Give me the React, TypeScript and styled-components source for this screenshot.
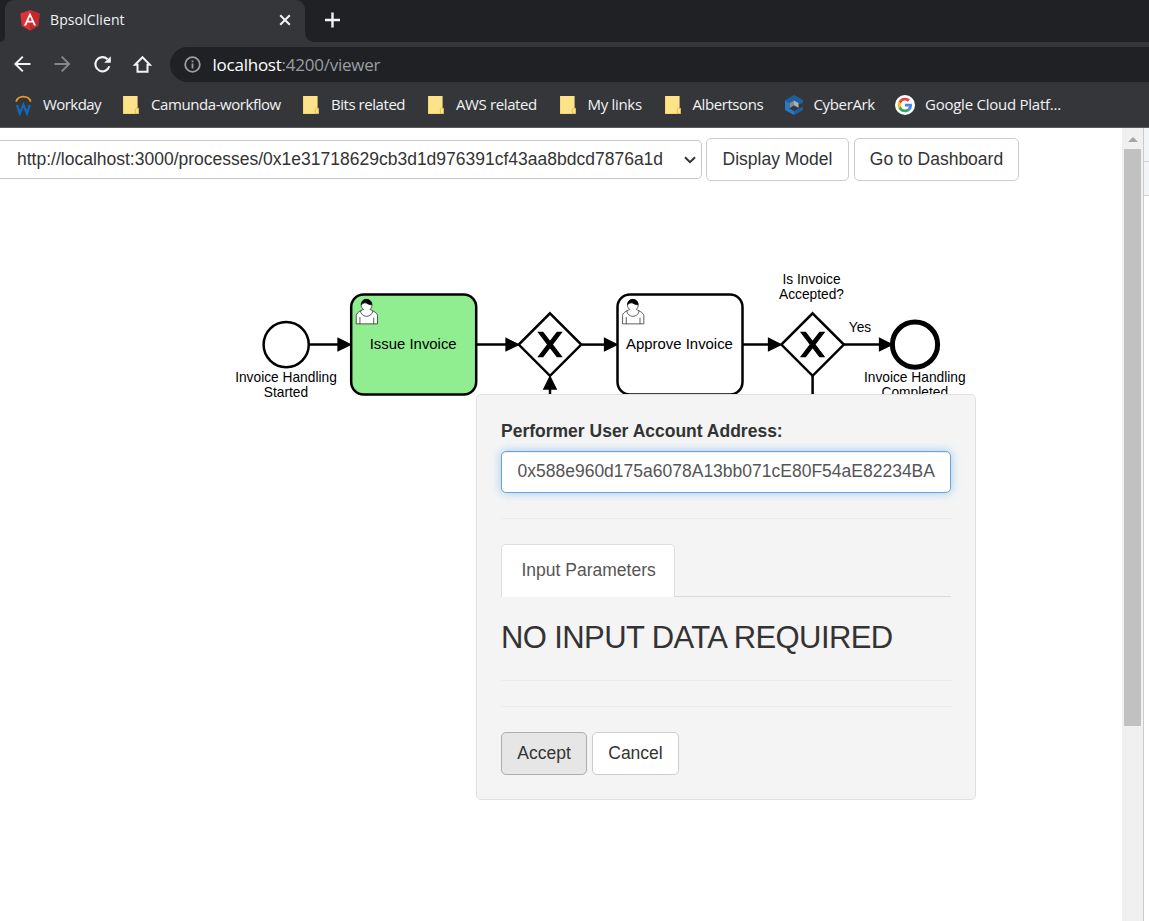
import React from 'react';
import styled, { createGlobalStyle } from 'styled-components';

const GlobalStyle = createGlobalStyle`
  *, *::before, *::after { box-sizing: border-box; }
  body { margin: 0; background: #fff; overflow: hidden; }
`;

const uiFont = `'Open Sans', 'Noto Sans', sans-serif`;
const pageFont = `'Liberation Sans', Arial, sans-serif`;

const Window = styled.div`
  width: 1149px;
  height: 921px;
  display: flex;
  flex-direction: column;
  overflow: hidden;
  background: #fff;
`;

const TabStrip = styled.div`
  height: 42px;
  flex: none;
  display: flex;
  background: #202124;
`;

const StripEdge = styled.div`
  width: 5px;
  background: #35363a;
  &::before {
    content: '';
    display: block;
    height: 42px;
    background: #202124;
    border-bottom-right-radius: 6px;
  }
`;

const Tab = styled.div`
  width: 300px;
  display: flex;
  align-items: center;
  padding: 0 13px 2px 15px;
  background: #35363a;
  border-radius: 9px 9px 0 0;
  color: #f1f3f4;
`;

const TabTitle = styled.span`
  flex: 1;
  margin-left: 10px;
  font: 14px/20px ${uiFont};
  letter-spacing: 0.1px;
`;

const StripRest = styled.div`
  flex: 1;
  background: #35363a;
`;

const StripRestInner = styled.div`
  height: 42px;
  background: #202124;
  border-bottom-left-radius: 9px;
  display: flex;
  align-items: center;
  padding: 0 0 2px 18px;
`;

const Toolbar = styled.div`
  height: 41px;
  flex: none;
  display: flex;
  align-items: center;
  padding-left: 12px;
  background: #35363a;
  padding-top: 4px;
`;

const NavIcon = styled.span`
  width: 40px;
  height: 22px;
  display: flex;
  align-items: center;
  padding-bottom: 1px;
`;

const AddressBar = styled.div`
  flex: 1;
  height: 35px;
  display: flex;
  align-items: center;
  margin-left: -2px;
  padding-left: 13px;
  border-radius: 18px 0 0 18px;
  background: #202124;
`;

const Url = styled.span`
  margin-left: 10.500px;
  font: 17px/24px ${uiFont};
  letter-spacing: -0.24px;
  color: #9a9da1;
  b { font-weight: 400; color: #fff; }
`;

const BookmarkBar = styled.div`
  height: 45px;
  flex: none;
  display: flex;
  align-items: center;
  background: #35363a;
  border-bottom: 1px solid #5a5b5f;
  padding-left: 15px;
`;

const Bookmark = styled.div<{ $width: number; $gap: number; $spacing: number }>`
  width: ${(p) => p.$width}px;
  flex: none;
  display: flex;
  align-items: center;
  gap: ${(p) => p.$gap}px;
  font: 15px/20px ${uiFont};
  letter-spacing: ${(p) => p.$spacing}px;
  white-space: nowrap;
  color: #f1f3f4;
  svg { flex: none; }
  span { padding-bottom: 2px; }
`;

const Body = styled.div`
  flex: 1;
  display: flex;
  min-height: 0;
`;

const Page = styled.main`
  width: 1122px;
  display: flex;
  flex-direction: column;
  font-family: ${pageFont};
  background: #fff;
`;

const Controls = styled.div`
  height: 62px;
  flex: none;
  display: flex;
  align-items: center;
  padding-top: 1px;
  gap: 5px;
`;

const ProcessSelect = styled.div`
  width: 702px;
  height: 39px;
  margin-right: -1px;
  display: flex;
  align-items: center;
  justify-content: space-between;
  padding: 0 5px 0 17px;
  border: 1px solid #c8c8c8;
  border-left: 0;
  border-radius: 0 5px 5px 0;
  font-size: 17.5px;
  color: #333;
  white-space: nowrap;
`;

const Button = styled.button<{ $width: number; $active?: boolean }>`
  width: ${(p) => p.$width}px;
  height: 43px;
  padding: 0;
  border: 1px solid ${(p) => (p.$active ? '#adadad' : '#ccc')};
  border-radius: 5px;
  background: ${(p) => (p.$active ? '#e6e6e6' : '#fff')};
  font: 17.5px/25px ${pageFont};
  color: #333;
  white-space: nowrap;
`;

const Stage = styled.div`
  flex: 1;
  position: relative;
  svg { display: block; }
`;

const Panel = styled.section`
  position: absolute;
  left: 476px;
  top: 204px;
  width: 500px;
  height: 406px;
  padding: 24px;
  border: 1px solid #e0e0e0;
  border-radius: 5px;
  background: #f4f4f4;
  color: #333;
`;

const FieldLabel = styled.div`
  font: bold 17.5px/25px ${pageFont};
  margin-bottom: 7px;
`;

const Field = styled.div`
  height: 42px;
  display: flex;
  align-items: center;
  padding: 0 0 1px 15.500px;
  border: 1px solid #66a6dc;
  border-radius: 5px;
  background: #fff;
  box-shadow: inset 0 1px 1px rgba(0, 0, 0, 0.075), 0 0 10px rgba(102, 175, 233, 0.6);
  font-size: 17.5px;
  color: #555;
  white-space: nowrap;
`;

const Rule = styled.hr`
  height: 1px;
  border: 0;
  margin: 25px 0;
  background: #ebebeb;
`;

const Tabs = styled.div`
  height: 53px;
  display: flex;
  border-bottom: 1px solid #d9d9d9;
`;

const PanelTab = styled.div`
  width: 174px;
  height: 53px;
  padding: 13px 0 0 19.500px;
  border: 1px solid #ddd;
  border-bottom: 0;
  border-radius: 5px 5px 0 0;
  background: #fff;
  font-size: 17.5px;
  line-height: 25px;
  color: #555;
  white-space: nowrap;
`;

const Notice = styled.h2`
  margin: 23px 0;
  font-size: 31px;
  line-height: 35px;
  font-weight: 400;
  letter-spacing: -0.6px;
  white-space: nowrap;
`;

const Actions = styled.div`
  display: flex;
  gap: 5px;
`;

const Scrollbar = styled.div`
  width: 21px;
  display: flex;
  flex-direction: column;
  align-items: center;
  background: #f0f0f0;
  svg { display: block; margin: 9px 0 7px; }
`;

const Thumb = styled.div`
  width: 17px;
  height: 577px;
  background: #c1c1c1;
`;

const SidePane = styled.div`
  flex: 1;
  border-left: 1px solid #cacbcc;
`;

const SideRow = styled.div`
  height: 34px;
  border-bottom: 1px solid #cfcfd3;
  background: #f3f4f8;
`;

const FolderIcon = () => (
  <svg width="16" height="18" viewBox="0 0 16 18">
    <path d="M0 0h14.6v12.4h1V18H0z" fill="#fde28a" />
    <path d="M12.4 17.5v-4.3l1.2-1h2V17.5z" fill="#fbe48f" stroke="#d9b549" strokeWidth=".8" />
    <path d="M.3 0v17.7h12" fill="none" stroke="#e8c860" strokeWidth=".6" />
  </svg>
);

const WorkdayIcon = () => (
  <svg width="17" height="22" viewBox="0 0 17 22">
    <path d="M1.200 7.600a7.300 6 0 0 1 14.400 0" fill="none" stroke="#f0982a" strokeWidth="1.900" />
    <path d="M2 10.800l2.800 8.700 3.600-8.700 3.600 8.700 2.800-8.700" fill="none" stroke="#1467b8" strokeWidth="2.300" />
  </svg>
);

const CyberArkIcon = () => (
  <svg width="18" height="20" viewBox="0 0 18 20">
    <path d="M9 0l9 5v3l-4 1.500L9 5.500 4.500 8 0 5z" fill="#1c5f9f" />
    <path d="M0 5l4.500 3v5.500L9 16v4l-9-5z" fill="#2b79c0" />
    <path d="M9 20v-4l4.500-2.500L18 12v3z" fill="#1b63a6" />
    <path d="M9 5.500l4.500 2.500v5L9 10.500z" fill="#aeb1b0" />
    <path d="M4.500 8L9 5.500v5l-4.500 3z" fill="#7f8b93" />
    <path d="M4.500 13.500L9 10.500l4.500 2.500L9 16z" fill="#2c3c4b" />
  </svg>
);

const GoogleIcon = () => (
  <svg width="20" height="20" viewBox="0 0 20 20">
    <circle cx="10" cy="10" r="10" fill="#fff" />
    <g transform="translate(2.7 2.7) scale(.304)">
      <path fill="#ea4335" d="M24 9.500c3.540 0 6.710 1.220 9.210 3.600l6.850-6.850C35.900 2.380 30.470 0 24 0 14.620 0 6.510 5.380 2.560 13.220l7.980 6.190C12.430 13.720 17.740 9.500 24 9.500z" />
      <path fill="#4285f4" d="M46.980 24.550c0-1.570-.15-3.090-.38-4.550H24v9.020h12.940c-.58 2.960-2.260 5.480-4.780 7.180l7.730 6c4.510-4.180 7.090-10.360 7.090-17.650z" />
      <path fill="#fbbc05" d="M10.530 28.590c-.48-1.450-.76-2.990-.76-4.590s.27-3.140.76-4.590l-7.980-6.190C.92 16.460 0 20.120 0 24c0 3.880.92 7.540 2.560 10.780l7.970-6.190z" />
      <path fill="#34a853" d="M24 48c6.480 0 11.930-2.130 15.890-5.810l-7.730-6c-2.150 1.450-4.920 2.300-8.160 2.300-6.260 0-11.570-4.220-13.470-9.910l-7.980 6.190C6.510 42.620 14.620 48 24 48z" />
    </g>
  </svg>
);

const bookmarks = [
  { label: 'Workday', icon: <WorkdayIcon />, width: 108, gap: 11, spacing: -0.55 },
  { label: 'Camunda-workflow', icon: <FolderIcon />, width: 180, gap: 12, spacing: -0.42 },
  { label: 'Bits related', icon: <FolderIcon />, width: 125, gap: 12, spacing: -0.45 },
  { label: 'AWS related', icon: <FolderIcon />, width: 132, gap: 12, spacing: -0.38 },
  { label: 'My links', icon: <FolderIcon />, width: 105, gap: 11.5, spacing: -0.3 },
  { label: 'Albertsons', icon: <FolderIcon />, width: 120, gap: 11.5, spacing: -0.42 },
  { label: 'CyberArk', icon: <CyberArkIcon />, width: 110, gap: 10.5, spacing: -0.35 },
  { label: 'Google Cloud Platf...', icon: <GoogleIcon />, width: 170, gap: 10, spacing: -0.25 },
];

const AngularIcon = () => (
  <svg width="20" height="21" viewBox="0 0 20 21">
    <path d="M10 0l9.700 3.400-1.500 12.500L10 20.500l-8.200-4.600L.3 3.400z" fill="#dd3138" />
    <path d="M10 0l9.700 3.400-1.500 12.500L10 20.500z" fill="#c3272f" />
    <path d="M10 2.500L4 15.600h2.200l1.200-3h5.200l1.200 3H16zM10 6.600l1.800 4.200H8.200z" fill="#fff" fillRule="evenodd" />
  </svg>
);

const Task = ({ x, fill, label }: { x: number; fill: string; label: string }) => (
  <g>
    <rect x={x} y={294.500} width={125} height={100} rx={12.500} fill={fill} stroke="#000" strokeWidth={2.500} />
    <g transform={`translate(${x} 294.500) scale(1.25)`} stroke="#000" strokeWidth=".5">
      <path
        fill="#fff"
        d="m15 12c.909-.845 1.594-2.049 1.594-3.385 0-2.554-1.805-4.622-4.357-4.622-2.552 0-4.288 2.068-4.288 4.622 0 1.348.974 2.562 1.896 3.405-.529.187-5.669 2.097-5.794 4.756v6.718h17v-6.718c0-2.298-5.528-4.595-6.051-4.776zm-8 6v5.500m11 0v-5"
      />
      <path fill="none" d="m15 12m2.162 1.009c0 2.447-2.158 4.431-4.821 4.431-2.665 0-4.822-1.981-4.822-4.431" />
      <path d="m15 12m-6.900-3.800c0 0 2.251-2.358 4.274-1.177 2.024 1.181 4.221 1.537 4.124.965-.098-.57-.117-3.791-4.191-4.136-3.572-.303-4.360 3.450-4.208 4.348z" />
    </g>
    <text x={x + 62} y={349} fontSize={14.900} textAnchor="middle">{label}</text>
  </g>
);

const Gateway = ({ x }: { x: number }) => (
  <g>
    <path d={`M${x} 313.300l31.250 31.250-31.250 31.250-31.250-31.250z`} fill="#fff" stroke="#000" strokeWidth={2.500} />
    <path
      transform={`translate(${x} 344.500) scale(1.25)`}
      d="M-9.143-9.714l7.429 9.714-7.429 9.714h3.429l5.714-7.464 5.714 7.464h3.429L1.714 0l7.429-9.714H5.714L0-2.250l-5.714-7.464z"
      stroke="#000"
    />
  </g>
);

const Flow = ({ from, to }: { from: number; to: number }) => (
  <g>
    <path d={`M${from} 344.600H${to - 5}`} stroke="#000" strokeWidth={2.500} />
    <path d={`M${to} 344.600l-12.500 6.250v-12.500z`} stroke="#000" strokeWidth={1.250} />
  </g>
);

const Diagram = () => (
  <svg width="1122" height="731" viewBox="0 190 1122 731" fontFamily="'Liberation Sans', Arial, sans-serif">
    <circle cx={286.200} cy={344.600} r={22.600} fill="#fff" stroke="#000" strokeWidth={2.500} />
    <Task x={351.200} fill="#90ee90" label="Issue Invoice" />
    <Task x={617.500} fill="#fff" label="Approve Invoice" />
    <Gateway x={550} />
    <Gateway x={812.600} />
    <circle cx={915} cy={344.600} r={22.600} fill="#fff" stroke="#000" strokeWidth={5} />
    <Flow from={309.500} to={350.500} />
    <Flow from={477} to={518.500} />
    <Flow from={582} to={617} />
    <Flow from={743} to={781} />
    <Flow from={844} to={892} />
    <path d="M550 410V385M812.600 376v40" stroke="#000" strokeWidth={2.500} />
    <path d="M550 376.500l6.250 12.500h-12.500z" stroke="#000" strokeWidth={1.250} />
    <g fontSize={13.750} textAnchor="middle">
      <text x={286} y={382}>Invoice Handling</text>
      <text x={286} y={397}>Started</text>
      <text x={811.500} y={284}>Is Invoice</text>
      <text x={811.500} y={299}>Accepted?</text>
      <text x={860} y={332}>Yes</text>
      <text x={914.800} y={382}>Invoice Handling</text>
      <text x={914.800} y={397}>Completed</text>
    </g>
  </svg>
);

export default function App() {
  return (
    <Window>
      <GlobalStyle />
      <TabStrip>
        <StripEdge />
        <Tab>
          <AngularIcon />
          <TabTitle>BpsolClient</TabTitle>
          <svg width="14" height="14" viewBox="0 0 14 14" stroke="#f1f3f4" strokeWidth="2">
            <path d="M2.200 2.200l9.600 9.600M11.800 2.200l-9.600 9.600" />
          </svg>
        </Tab>
        <StripRest>
          <StripRestInner>
            <svg width="18" height="18" viewBox="0 0 18 18" stroke="#f1f3f4" strokeWidth="2.400">
              <path d="M9.500 1.500v15M2 9h15" />
            </svg>
          </StripRestInner>
        </StripRest>
      </TabStrip>
      <Toolbar>
        <NavIcon>
          <svg width="20" height="20" viewBox="0 0 20 20" fill="none" stroke="#f1f3f4" strokeWidth="2">
            <path d="M18.500 10H4M10.800 2.600L3.400 10l7.400 7.400" />
          </svg>
        </NavIcon>
        <NavIcon>
          <svg width="20" height="20" viewBox="0 0 20 20" fill="none" stroke="#85878a" strokeWidth="2">
            <path d="M2.500 10H17M9.700 2.600l7.400 7.400-7.400 7.400" />
          </svg>
        </NavIcon>
        <NavIcon>
          <svg width="20" height="20" viewBox="0 0 20 20" fill="none" stroke="#f1f3f4" strokeWidth="2.100">
            <path d="M17.300 12.200A7.100 7.100 0 1 1 15.500 5.200" />
            <path d="M18.800 2.200v6.600h-6.600z" fill="#f1f3f4" stroke="none" />
          </svg>
        </NavIcon>
        <NavIcon>
          <svg width="20" height="20" viewBox="0 0 20 20" fill="none" stroke="#f1f3f4" strokeWidth="2">
            <path d="M3 10.800h2.500v6.900h10v-6.900H18L10.500 3.200z" />
          </svg>
        </NavIcon>
        <AddressBar>
          <svg width="19" height="19" viewBox="0 0 19 19" fill="none" stroke="#9a9da1" strokeWidth="1.800">
            <circle cx="9.500" cy="9.500" r="7.300" />
            <path d="M9.500 8.500v5M9.500 5.400v1.800" />
          </svg>
          <Url><b>localhost</b>:4200/viewer</Url>
        </AddressBar>
      </Toolbar>
      <BookmarkBar>
        {bookmarks.map((b) => (
          <Bookmark key={b.label} $width={b.width} $gap={b.gap} $spacing={b.spacing}>
            {b.icon}
            <span>{b.label}</span>
          </Bookmark>
        ))}
      </BookmarkBar>
      <Body>
        <Page>
          <Controls>
            <ProcessSelect>
              <span>http://localhost:3000/processes/0x1e31718629cb3d1d976391cf43aa8bdcd7876a1d</span>
              <svg width="12" height="8" viewBox="0 0 12 8" fill="none" stroke="#333" strokeWidth="2">
                <path d="M1 1.200l5 5 5-5" />
              </svg>
            </ProcessSelect>
            <Button $width={143}>Display Model</Button>
            <Button $width={165}>Go to Dashboard</Button>
          </Controls>
          <Stage>
            <Diagram />
            <Panel>
              <FieldLabel>Performer User Account Address:</FieldLabel>
              <Field>0x588e960d175a6078A13bb071cE80F54aE82234BA</Field>
              <Rule />
              <Tabs>
                <PanelTab>Input Parameters</PanelTab>
              </Tabs>
              <Notice>NO INPUT DATA REQUIRED</Notice>
              <Rule />
              <Rule />
              <Actions>
                <Button $width={86} $active>Accept</Button>
                <Button $width={87}>Cancel</Button>
              </Actions>
            </Panel>
          </Stage>
        </Page>
        <Scrollbar>
          <svg width="10" height="5" viewBox="0 0 10 5">
            <path d="M5 0l5 5H0z" fill="#a3a3a3" />
          </svg>
          <Thumb />
        </Scrollbar>
        <SidePane>
          <SideRow />
          <SideRow />
        </SidePane>
      </Body>
    </Window>
  );
}
